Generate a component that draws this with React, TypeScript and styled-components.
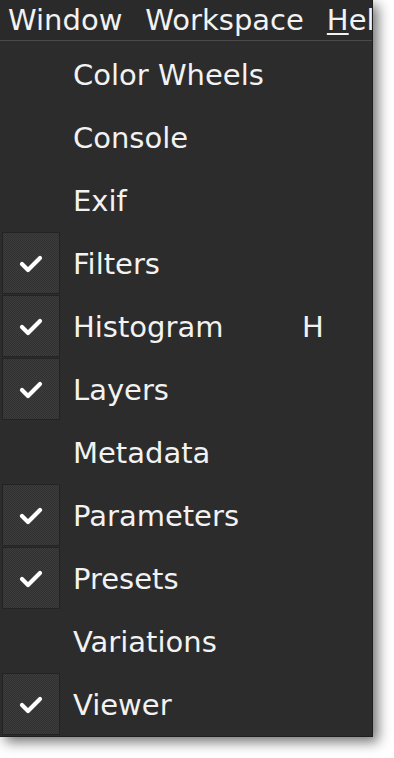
import React from "react";
import styled, { createGlobalStyle } from "styled-components";

const Global = createGlobalStyle`
  html, body { margin: 0; padding: 0; background: #ffffff; }
  body { width: 394px; height: 758px; overflow: hidden; }
`;

const Frame = styled.div`
  width: 373px;
  height: 737px;
  background: #2c2c2c;
  box-shadow: 5px 5px 12px rgba(0, 0, 0, 0.55);
  display: flex;
  flex-direction: column;
  font-family: "DejaVu Sans", "Liberation Sans", sans-serif;
  color: #f2f2f2;
  overflow: hidden;
  border-right: 1px solid #1e1e1e;
  border-bottom: 1px solid #1e1e1e;
  box-sizing: border-box;
`;

const MenuBar = styled.div`
  height: 41px;
  box-sizing: border-box;
  border-bottom: 1px solid #4a4a4a;
  display: flex;
  align-items: center;
  gap: 23px;
  padding-left: 8px;
  font-size: 29px;
  white-space: nowrap;
  background: #2a2a2a;
`;

const BarItem = styled.span``;

const Mnemonic = styled.span`
  text-decoration: underline;
  text-underline-offset: 3px;
`;

const List = styled.div`
  display: flex;
  flex-direction: column;
  padding-top: 2px;
`;

const Row = styled.div`
  height: 63px;
  display: grid;
  grid-template-columns: 73px 1fr 70px;
  align-items: center;
  font-size: 29px;
`;

const CheckCell = styled.div<{ $checked: boolean }>`
  align-self: stretch;
  margin: 0 13px 1px 2px;
  box-sizing: border-box;
  display: flex;
  align-items: center;
  justify-content: center;
  ${(p) =>
    p.$checked
      ? `
    border: 1px solid #232323;
    background: repeating-conic-gradient(#3d3d3d 0 25%, #303030 0 50%) 0 0 / 2px 2px;
  `
      : ""}
`;

const Label = styled.span`
  white-space: nowrap;
`;

const Shortcut = styled.span`
  justify-self: start;
`;

const Check = () => (
  <svg width="24" height="20" viewBox="0 0 24 20">
    <path
      d="M3 11 L9 17 L21 5"
      fill="none"
      stroke="#ffffff"
      strokeWidth="4.2"
      strokeLinecap="round"
      strokeLinejoin="round"
    />
  </svg>
);

const items: { label: string; checked: boolean; shortcut?: string }[] = [
  { label: "Color Wheels", checked: false },
  { label: "Console", checked: false },
  { label: "Exif", checked: false },
  { label: "Filters", checked: true },
  { label: "Histogram", checked: true, shortcut: "H" },
  { label: "Layers", checked: true },
  { label: "Metadata", checked: false },
  { label: "Parameters", checked: true },
  { label: "Presets", checked: true },
  { label: "Variations", checked: false },
  { label: "Viewer", checked: true },
];

export default function App() {
  return (
    <>
      <Global />
      <Frame>
        <MenuBar>
          <BarItem>Window</BarItem>
          <BarItem>Workspace</BarItem>
          <BarItem>
            <Mnemonic>H</Mnemonic>elp
          </BarItem>
        </MenuBar>
        <List>
          {items.map((it) => (
            <Row key={it.label}>
              <CheckCell $checked={it.checked}>{it.checked && <Check />}</CheckCell>
              <Label>{it.label}</Label>
              <Shortcut>{it.shortcut ?? ""}</Shortcut>
            </Row>
          ))}
        </List>
      </Frame>
    </>
  );
}
